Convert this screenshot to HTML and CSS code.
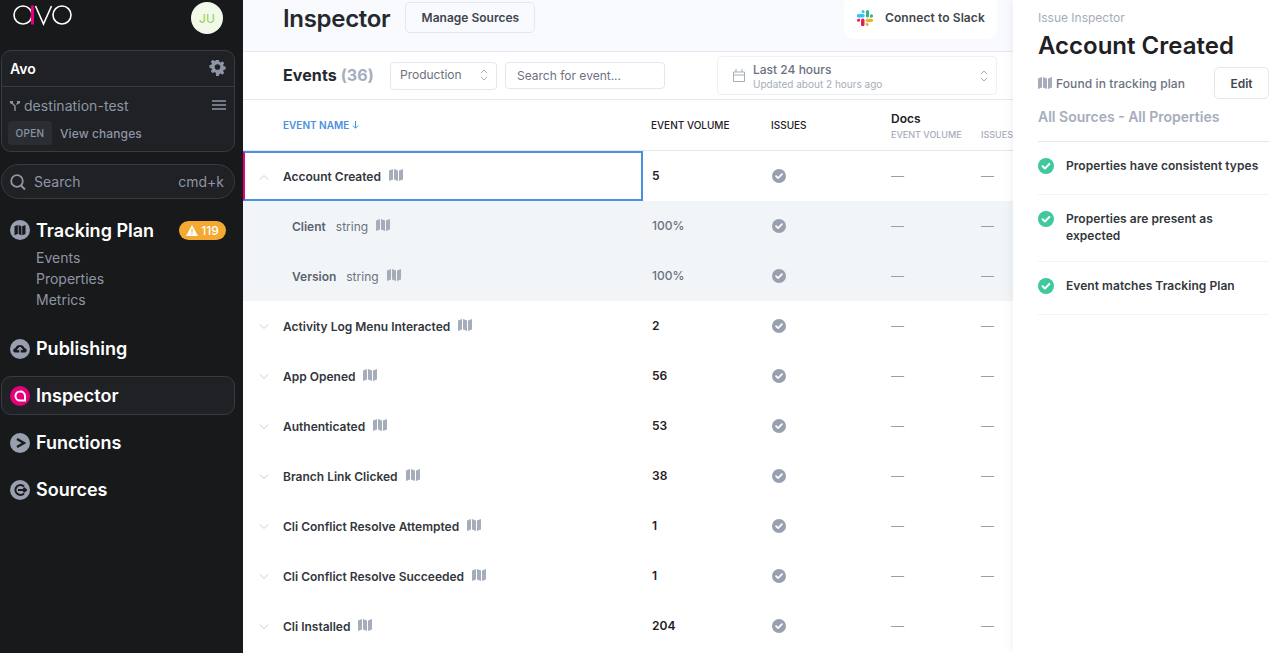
FILE: index.html
```html
<!DOCTYPE html>
<html>
  <head>
    <meta charset="UTF-8">
    <title>Inspector</title>
    <link rel="stylesheet" href="styles.css">
  </head>
  <body>
    <svg class="sprite" width="0" height="0">
      <symbol id="map" viewBox="0 0 14 12">
        <path d="M0 1.6 4 0v10.4L0 12zM5 0l4 1.6V12l-4-1.6zM10 1.6 14 0v10.4L10 12z" fill="currentColor"/>
      </symbol>
      <symbol id="check" viewBox="0 0 16 16">
        <circle cx="8" cy="8" r="8" fill="currentColor"/>
        <path d="M4.6 8.2 7 10.5l4.4-4.6" fill="none" stroke="#fff" stroke-width="2" stroke-linecap="round" stroke-linejoin="round"/>
      </symbol>
      <symbol id="updown" viewBox="0 0 8 12">
        <path d="M1 4.2 4 1l3 3.2M1 7.8 4 11l3-3.2" fill="none" stroke="currentColor" stroke-width="1"/>
      </symbol>
    </svg>

    <div class="app">
      <aside class="sidebar">
        <div class="brand">
          <svg class="logo" width="62" height="22" viewBox="0 0 62 22">
            <circle cx="11" cy="11" r="9" fill="none" stroke="#fff" stroke-width="1.6"/>
            <rect x="19" y="1.5" width="3" height="19" fill="#e6007e"/>
            <path d="M23.5 2 31.5 20 39.5 2" fill="none" stroke="#fff" stroke-width="1.6"/>
            <circle cx="50" cy="11" r="9" fill="none" stroke="#fff" stroke-width="1.6"/>
          </svg>
          <div class="avatar">JU</div>
        </div>

        <div class="workspace">
          <div class="workspace-top">
            <span>Avo</span>
            <svg class="gear" width="17" height="17" viewBox="0 0 18 18">
              <path d="M7.4 1h3.2l.4 2.2 1.4.6 1.9-1.3 2.2 2.2-1.3 1.9.6 1.4 2.2.4v3.2l-2.2.4-.6 1.4 1.3 1.9-2.2 2.2-1.9-1.3-1.4.6-.4 2.2H7.4L7 15.200l-1.400-.6-1.900 1.300-2.200-2.200 1.300-1.900-.6-1.400L0 10V6.800l2.200-.4.6-1.400L1.500 3.100 3.700.9l1.900 1.300L7 1.600z" transform="translate(0.500 0) scale(.95)" fill="#8e96a6"/>
              <circle cx="9" cy="8.500" r="3" fill="#1f2124"/>
            </svg>
          </div>
          <div class="workspace-branch">
            <div class="branch-line">
              <svg width="10" height="10" viewBox="0 0 10 10">
                <path d="M1.500 1.500 5 5v5M8.500 1.500 6.500 3.500" fill="none" stroke="#8e96a6" stroke-width="1.400"/>
                <rect x="0" y="0" width="3" height="2.500" fill="#8e96a6"/>
                <rect x="7" y="0" width="3" height="2.500" fill="#8e96a6"/>
              </svg>
              <span class="branch-name">destination-test</span>
              <svg class="burger" width="14" height="10" viewBox="0 0 14 10">
                <path d="M0 1h14M0 5h14M0 9h14" stroke="#8e96a6" stroke-width="1.600"/>
              </svg>
            </div>
            <div class="branch-status">
              <span class="open-tag">OPEN</span>
              <span class="view-changes">View changes</span>
            </div>
          </div>
        </div>

        <div class="search-box">
          <svg width="16" height="18" viewBox="0 0 16 18">
            <circle cx="7" cy="8" r="5.800" fill="none" stroke="#8e96a6" stroke-width="1.800"/>
            <path d="m11 12.500 4 4" stroke="#8e96a6" stroke-width="2"/>
          </svg>
          <span class="search-label">Search</span>
          <span class="search-key">cmd+k</span>
        </div>

        <nav class="nav">
          <div class="nav-item nav-tracking">
            <svg class="nav-icon" viewBox="0 0 20 20">
              <circle cx="10" cy="10" r="10" fill="#98a0b0"/>
              <path d="M4.500 6.200 7.800 5v9l-3.300 1.200zM8.600 5l2.800 1.200v9l-2.800-1.200zM12.200 6.200 15.500 5v9l-3.300 1.200z" fill="#18191b"/>
            </svg>
            <span>Tracking Plan</span>
            <span class="warn-badge">
              <svg width="12" height="11" viewBox="0 0 12 11">
                <path d="M6 0 12 11H0z" fill="#fff"/>
                <path d="M5.400 4h1.200v3.600H5.400zM5.400 8.300h1.200v1.200H5.400z" fill="#f5a933"/>
              </svg>
              119
            </span>
          </div>
          <div class="subnav">
            <a>Events</a>
            <a>Properties</a>
            <a>Metrics</a>
          </div>
          <div class="nav-item">
            <svg class="nav-icon" viewBox="0 0 20 20">
              <circle cx="10" cy="10" r="10" fill="#98a0b0"/>
              <path d="M4.500 13.500c-2-1-1.500-4 .8-4.200C6 7 8 6 10 6s4 1.200 4.700 3.300c2.300.2 2.800 3.200.8 4.200z" fill="#18191b"/>
              <path d="M10 15V9M7.500 11 10 8.500l2.500 2.500" fill="none" stroke="#98a0b0" stroke-width="1.500"/>
            </svg>
            <span>Publishing</span>
          </div>
          <div class="nav-item nav-active">
            <svg class="nav-icon" viewBox="0 0 20 20">
              <circle cx="10" cy="10" r="10" fill="#e6007e"/>
              <path d="M10 5.500a4.500 4.500 0 1 0 0 9h5v-4.500a4.500 4.500 0 0 0-5-4.500z" fill="none" stroke="#fff" stroke-width="2"/>
            </svg>
            <span>Inspector</span>
          </div>
          <div class="nav-item">
            <svg class="nav-icon" viewBox="0 0 20 20">
              <circle cx="10" cy="10" r="10" fill="#98a0b0"/>
              <path d="m7 6 7 4-7 4" fill="none" stroke="#18191b" stroke-width="2.400"/>
            </svg>
            <span>Functions</span>
          </div>
          <div class="nav-item">
            <svg class="nav-icon" viewBox="0 0 20 20">
              <circle cx="10" cy="10" r="10" fill="#98a0b0"/>
              <path d="M14 6.500A5 5 0 1 0 14 13.500M8 10h8M13.500 7.800 16 10l-2.500 2.200" fill="none" stroke="#18191b" stroke-width="2"/>
            </svg>
            <span>Sources</span>
          </div>
        </nav>
      </aside>

      <main class="main">
        <header class="page-header">
          <h1>Inspector</h1>
          <button class="btn-manage">Manage Sources</button>
          <div class="slack-btn">
            <svg width="16" height="16" viewBox="0 0 16 16">
              <path d="M6 0a1.500 1.500 0 0 0 0 3h1.500V1.500A1.500 1.500 0 0 0 6 0zM1.500 4a1.500 1.500 0 0 0 0 3.500H6a1.700 1.700 0 0 0 0-3.500z" fill="#36c5f0"/>
              <path d="M16 5.800a1.500 1.500 0 0 0-3 0v1.700h1.500A1.500 1.500 0 0 0 16 5.800zM12 1.500a1.500 1.500 0 0 0-3 0V6a1.500 1.500 0 0 0 3 0z" fill="#2eb67d"/>
              <path d="M10.200 16a1.500 1.500 0 0 0 0-3H8.700v1.500a1.500 1.500 0 0 0 1.500 1.500zM14.500 12a1.500 1.500 0 0 0 0-3.200h-4.300a1.600 1.600 0 0 0 0 3.200z" fill="#ecb22e"/>
              <path d="M0 10.200a1.500 1.500 0 0 0 3 0V8.700H1.500A1.500 1.500 0 0 0 0 10.200zM4 14.500a1.500 1.500 0 0 0 3.500 0v-4.300a1.700 1.700 0 0 0-3.500 0z" fill="#e01e5a"/>
            </svg>
            <span>Connect to Slack</span>
          </div>
        </header>

        <div class="toolbar">
          <div class="events-title">Events <span>(36)</span></div>
          <div class="env-select">
            <span>Production</span>
            <svg class="updown" width="8" height="12"><use href="#updown"/></svg>
          </div>
          <div class="event-search">Search for event...</div>
          <div class="date-select">
            <svg width="12" height="13" viewBox="0 0 12 13">
              <path d="M.5 3h11v9.500H.5zM.5 6h11M3 0v3M9 0v3" fill="none" stroke="#a5adbb"/>
            </svg>
            <div class="date-text">
              <div class="date-main">Last 24 hours</div>
              <div class="date-sub">Updated about 2 hours ago</div>
            </div>
            <svg class="updown" width="8" height="12"><use href="#updown"/></svg>
          </div>
        </div>

        <div class="table">
          <div class="row head">
            <div class="cell-name sort-head">EVENT NAME <svg width="7" height="8" viewBox="0 0 7 8"><path d="M3.500 0v7M.8 4.500l2.700 2.700 2.700-2.700" fill="none" stroke="currentColor"/></svg></div>
            <div class="cell-col">EVENT VOLUME</div>
            <div class="cell-col">ISSUES</div>
            <div class="cell-col source-head">
              <strong>Docs</strong>
              <em>EVENT VOLUME</em>
            </div>
            <div class="cell-col source-head">
              <strong>&nbsp;</strong>
              <em>ISSUES</em>
            </div>
          </div>

          <div class="row selected">
            <div class="cell-name">
              <svg class="chevron" width="10" height="6" viewBox="0 0 10 6"><path d="M1 5.500 5 1.500l4 4" fill="none" stroke="currentColor"/></svg>
              <span class="event-name">Account Created</span>
              <svg class="map-icon" width="14" height="12"><use href="#map"/></svg>
            </div>
            <div class="cell-num">5</div>
            <div class="cell-issue"><svg width="14" height="14"><use href="#check"/></svg></div>
            <div class="cell-dash">—</div>
            <div class="cell-dash">—</div>
          </div>

          <div class="row prop">
            <div class="cell-name">
              <span class="prop-name">Client</span>
              <span class="prop-type">string</span>
              <svg class="map-icon" width="14" height="12"><use href="#map"/></svg>
            </div>
            <div class="cell-pct">100%</div>
            <div class="cell-issue"><svg width="14" height="14"><use href="#check"/></svg></div>
            <div class="cell-dash">—</div>
            <div class="cell-dash">—</div>
          </div>

          <div class="row prop">
            <div class="cell-name">
              <span class="prop-name">Version</span>
              <span class="prop-type">string</span>
              <svg class="map-icon" width="14" height="12"><use href="#map"/></svg>
            </div>
            <div class="cell-pct">100%</div>
            <div class="cell-issue"><svg width="14" height="14"><use href="#check"/></svg></div>
            <div class="cell-dash">—</div>
            <div class="cell-dash">—</div>
          </div>

          <div class="row">
            <div class="cell-name">
              <svg class="chevron" width="10" height="6" viewBox="0 0 10 6"><path d="M1 .5l4 4 4-4" fill="none" stroke="currentColor"/></svg>
              <span class="event-name">Activity Log Menu Interacted</span>
              <svg class="map-icon" width="14" height="12"><use href="#map"/></svg>
            </div>
            <div class="cell-num">2</div>
            <div class="cell-issue"><svg width="14" height="14"><use href="#check"/></svg></div>
            <div class="cell-dash">—</div>
            <div class="cell-dash">—</div>
          </div>

          <div class="row">
            <div class="cell-name">
              <svg class="chevron" width="10" height="6" viewBox="0 0 10 6"><path d="M1 .5l4 4 4-4" fill="none" stroke="currentColor"/></svg>
              <span class="event-name">App Opened</span>
              <svg class="map-icon" width="14" height="12"><use href="#map"/></svg>
            </div>
            <div class="cell-num">56</div>
            <div class="cell-issue"><svg width="14" height="14"><use href="#check"/></svg></div>
            <div class="cell-dash">—</div>
            <div class="cell-dash">—</div>
          </div>

          <div class="row">
            <div class="cell-name">
              <svg class="chevron" width="10" height="6" viewBox="0 0 10 6"><path d="M1 .5l4 4 4-4" fill="none" stroke="currentColor"/></svg>
              <span class="event-name">Authenticated</span>
              <svg class="map-icon" width="14" height="12"><use href="#map"/></svg>
            </div>
            <div class="cell-num">53</div>
            <div class="cell-issue"><svg width="14" height="14"><use href="#check"/></svg></div>
            <div class="cell-dash">—</div>
            <div class="cell-dash">—</div>
          </div>

          <div class="row">
            <div class="cell-name">
              <svg class="chevron" width="10" height="6" viewBox="0 0 10 6"><path d="M1 .5l4 4 4-4" fill="none" stroke="currentColor"/></svg>
              <span class="event-name">Branch Link Clicked</span>
              <svg class="map-icon" width="14" height="12"><use href="#map"/></svg>
            </div>
            <div class="cell-num">38</div>
            <div class="cell-issue"><svg width="14" height="14"><use href="#check"/></svg></div>
            <div class="cell-dash">—</div>
            <div class="cell-dash">—</div>
          </div>

          <div class="row">
            <div class="cell-name">
              <svg class="chevron" width="10" height="6" viewBox="0 0 10 6"><path d="M1 .5l4 4 4-4" fill="none" stroke="currentColor"/></svg>
              <span class="event-name">Cli Conflict Resolve Attempted</span>
              <svg class="map-icon" width="14" height="12"><use href="#map"/></svg>
            </div>
            <div class="cell-num">1</div>
            <div class="cell-issue"><svg width="14" height="14"><use href="#check"/></svg></div>
            <div class="cell-dash">—</div>
            <div class="cell-dash">—</div>
          </div>

          <div class="row">
            <div class="cell-name">
              <svg class="chevron" width="10" height="6" viewBox="0 0 10 6"><path d="M1 .5l4 4 4-4" fill="none" stroke="currentColor"/></svg>
              <span class="event-name">Cli Conflict Resolve Succeeded</span>
              <svg class="map-icon" width="14" height="12"><use href="#map"/></svg>
            </div>
            <div class="cell-num">1</div>
            <div class="cell-issue"><svg width="14" height="14"><use href="#check"/></svg></div>
            <div class="cell-dash">—</div>
            <div class="cell-dash">—</div>
          </div>

          <div class="row">
            <div class="cell-name">
              <svg class="chevron" width="10" height="6" viewBox="0 0 10 6"><path d="M1 .5l4 4 4-4" fill="none" stroke="currentColor"/></svg>
              <span class="event-name">Cli Installed</span>
              <svg class="map-icon" width="14" height="12"><use href="#map"/></svg>
            </div>
            <div class="cell-num">204</div>
            <div class="cell-issue"><svg width="14" height="14"><use href="#check"/></svg></div>
            <div class="cell-dash">—</div>
            <div class="cell-dash">—</div>
          </div>
        </div>
      </main>

      <aside class="panel">
        <div class="panel-label">Issue Inspector</div>
        <h2>Account Created</h2>
        <div class="panel-found">
          <svg class="map-icon" width="14" height="12"><use href="#map"/></svg>
          <span>Found in tracking plan</span>
          <button class="btn-edit">Edit</button>
        </div>
        <div class="panel-scope">All Sources - All Properties</div>
        <div class="panel-item">
          <svg width="16" height="16"><use href="#check"/></svg>
          <span>Properties have consistent types</span>
        </div>
        <div class="panel-item">
          <svg width="16" height="16"><use href="#check"/></svg>
          <span>Properties are present as expected</span>
        </div>
        <div class="panel-item">
          <svg width="16" height="16"><use href="#check"/></svg>
          <span>Event matches Tracking Plan</span>
        </div>
      </aside>
    </div>
  </body>
</html>
```

FILE: styles.css
```css
* {
  box-sizing: border-box;
}

html, body {
  margin: 0;
  height: 100%;
  overflow: hidden;
}

body {
  background-color: #fff;
  font-family: Inter, "Liberation Sans", sans-serif;
  color: #1e2024;
}

.sprite {
  position: absolute;
}

.app {
  display: flex;
  height: 653px;
}

/* sidebar */

.sidebar {
  width: 243px;
  flex-shrink: 0;
  background-color: #18191b;
  padding: 0 8px 0 1px;
}

.brand {
  height: 50px;
  display: flex;
  align-items: flex-start;
  justify-content: space-between;
  padding: 4px 12px 0 11px;
}

.logo {
  display: block;
}

.avatar {
  width: 32px;
  height: 32px;
  margin-top: -2px;
  border-radius: 50%;
  background-color: #f2f9e9;
  color: #8ed14f;
  font-size: 12px;
  display: flex;
  align-items: center;
  justify-content: center;
}

.workspace {
  height: 102px;
  background-color: #1f2124;
  border: 1px solid #363b44;
  border-radius: 10px;
}

.workspace-top {
  height: 36px;
  border-bottom: 1px solid #363b44;
  display: flex;
  align-items: center;
  justify-content: space-between;
  padding: 0 8px;
  color: #fff;
  font-size: 14px;
  font-weight: 600;
}

.gear {
  margin-bottom: 2px;
}

.workspace-branch {
  padding: 10px 8px 0 6px;
}

.branch-line {
  display: flex;
  align-items: center;
  padding-left: 2px;
  color: #8e96a6;
  font-size: 14px;
}

.branch-name {
  margin-left: 4px;
  flex: 1;
  letter-spacing: 0.05px;
}

.burger {
  margin-bottom: 2px;
}

.branch-status {
  display: flex;
  align-items: center;
  margin-top: 7px;
}

.open-tag {
  width: 44px;
  height: 24px;
  background-color: #2a2e33;
  border-radius: 4px;
  color: #8e96a6;
  font-size: 10px;
  font-weight: 500;
  letter-spacing: 0.3px;
  display: flex;
  align-items: center;
  justify-content: center;
}

.view-changes {
  margin-left: 8px;
  color: #8e96a6;
  font-size: 12px;
  font-weight: 500;
  letter-spacing: 0.1px;
}

.search-box {
  height: 35px;
  margin-top: 12px;
  background-color: #1f2124;
  border: 1px solid #363b44;
  border-radius: 18px;
  display: flex;
  align-items: center;
  padding: 0 10px 0 8px;
  color: #8e96a6;
  font-size: 14px;
}

.search-label {
  margin-left: 8px;
  flex: 1;
}

.nav {
  padding-top: 21px;
}

.nav-item {
  height: 39px;
  margin-bottom: 8px;
  display: flex;
  align-items: center;
  padding-left: 8px;
  color: #fff;
  font-size: 18px;
  font-weight: 600;
  border: 1px solid transparent;
  border-radius: 10px;
}

.nav-icon {
  width: 20px;
  height: 20px;
  margin-right: 6px;
  flex-shrink: 0;
}

.nav-tracking {
  height: 20px;
  margin-bottom: 0;
  border: none;
  padding-left: 9px;
  padding-right: 9px;
}

.warn-badge {
  margin-left: auto;
  height: 19px;
  width: 47px;
  background-color: #f5a933;
  border-radius: 10px;
  color: #fff;
  font-size: 12px;
  font-weight: 500;
  display: flex;
  align-items: center;
  justify-content: center;
  gap: 3px;
}

.subnav {
  padding: 7px 0 0 35px;
  margin-bottom: 19px;
  color: #8e96a6;
  font-size: 14px;
}

.subnav a {
  display: block;
  height: 21px;
  line-height: 21px;
}

.nav-active {
  background-color: #1f2124;
  border-color: #363b44;
}

/* main column */

.main {
  width: 770px;
  flex-shrink: 0;
  overflow: hidden;
}

.page-header {
  height: 52px;
  background-color: #f8fafd;
  border-bottom: 1px solid #e4e7eb;
  display: flex;
  align-items: flex-start;
  padding: 2px 16px 0 40px;
}

.page-header h1 {
  margin: 0;
  font-size: 24px;
  font-weight: 600;
  line-height: 34px;
  letter-spacing: -0.3px;
  color: #25282d;
}

.btn-manage {
  margin-left: 15px;
  width: 130px;
  height: 31px;
  background: none;
  border: 1px solid #e4e7eb;
  border-radius: 5px;
  font-family: inherit;
  font-size: 12px;
  font-weight: 600;
  color: #41464e;
}

.slack-btn {
  margin-left: auto;
  margin-top: -6px;
  width: 153px;
  height: 43px;
  background-color: #fff;
  border-radius: 10px;
  display: flex;
  align-items: center;
  gap: 12px;
  padding-left: 13px;
  font-size: 12px;
  font-weight: 600;
  letter-spacing: 0.1px;
  color: #41464e;
}

.toolbar {
  height: 48px;
  border-bottom: 1px solid #e4e7eb;
  display: flex;
  align-items: center;
  padding: 0 16px 0 40px;
}

.events-title {
  font-size: 16px;
  font-weight: 700;
  width: 107px;
  padding-bottom: 2px;
  letter-spacing: 0.1px;
  color: #25282d;
}

.events-title span {
  color: #a5adbb;
}

.env-select {
  width: 107px;
  height: 28px;
  border: 1px solid #e4e7eb;
  border-radius: 4px;
  display: flex;
  align-items: center;
  justify-content: space-between;
  padding: 0 8px 2px 9px;
  font-size: 12px;
  color: #6b7280;
}

.updown {
  color: #a5adbb;
}

.event-search {
  width: 160px;
  height: 27px;
  margin-left: 8px;
  border: 1px solid #e4e7eb;
  border-radius: 4px;
  display: flex;
  align-items: center;
  padding-left: 11px;
  font-size: 12px;
  color: #6b7280;
}

.date-select {
  margin-left: auto;
  width: 280px;
  height: 39px;
  border: 1px solid #eef0f3;
  border-radius: 4px;
  display: flex;
  align-items: center;
  padding: 0 8px 0 15px;
}

.date-text {
  margin-left: 8px;
  flex: 1;
  padding-top: 1px;
}

.date-main {
  font-size: 12px;
  font-weight: 500;
  line-height: 15px;
  color: #6b7280;
}

.date-sub {
  font-size: 10px;
  line-height: 14px;
  color: #a5adbb;
}

/* table */

.row {
  display: grid;
  grid-template-columns: 400px 120px 120px 90px 40px;
  height: 50px;
  align-items: center;
}

.row.head {
  height: 51px;
  border-bottom: 1px solid #e4e7eb;
  font-size: 10px;
  font-weight: 500;
  color: #1e2024;
}

.row.prop {
  background-color: #f2f5f8;
}

.row.selected .cell-name {
  border: 2px solid #4a90e2;
  border-left-color: #e6007e;
  padding-left: 38px;
}

.cell-name {
  height: 100%;
  display: flex;
  align-items: center;
  padding-left: 40px;
  position: relative;
}

.sort-head {
  color: #4a90e2;
  font-weight: 600;
  gap: 3px;
}

.cell-col {
  padding-left: 8px;
}

.source-head strong {
  display: block;
  font-size: 12px;
  font-weight: 600;
  line-height: 17px;
}

.source-head em {
  display: block;
  font-style: normal;
  font-size: 9px;
  line-height: 16px;
  margin-bottom: -2px;
  color: #a5adbb;
  white-space: nowrap;
}

.chevron {
  position: absolute;
  left: 16px;
  top: 23px;
  color: #c6cbd3;
}

.row.selected .chevron {
  left: 14px;
  top: 21px;
}

.event-name {
  font-size: 12px;
  font-weight: 600;
  color: #33373d;
  padding-top: 1px;
}

.map-icon {
  color: #a5adbb;
  margin: 0 0 3px 8px;
}

.prop-name {
  margin-left: 9px;
  font-size: 12px;
  font-weight: 600;
  color: #5c6370;
  padding-top: 1px;
}

.prop-type {
  margin-left: 10px;
  font-size: 12px;
  color: #6b7280;
  padding-top: 1px;
}

.cell-num {
  padding-left: 9px;
  padding-bottom: 1px;
  font-size: 12px;
  font-weight: 600;
}

.cell-pct {
  padding-left: 9px;
  padding-bottom: 1px;
  font-size: 12px;
  font-weight: 500;
  color: #6b7280;
}

.cell-issue {
  padding-left: 9px;
  color: #98a0b0;
  display: flex;
}

.cell-dash {
  padding-left: 8px;
  padding-bottom: 1px;
  font-size: 13px;
  color: #98a0b0;
}

/* issue panel */

.panel {
  flex: 1;
  background-color: #fff;
  box-shadow: 0 0 10px rgba(0, 0, 0, 0.08);
  padding: 11px 19px 0 25px;
  position: relative;
}

.panel-label {
  font-size: 12px;
  line-height: 14px;
  color: #a5adbb;
}

.panel h2 {
  margin: 4px 0 0 0;
  font-size: 24px;
  font-weight: 600;
  line-height: 34px;
  color: #1e2024;
}

.panel-found {
  display: flex;
  align-items: center;
  margin-top: 4px;
  font-size: 12px;
  font-weight: 500;
  letter-spacing: 0.1px;
  color: #6b7280;
}

.panel-found .map-icon {
  margin: 0 4px 0 0;
}

.btn-edit {
  margin-left: auto;
  width: 55px;
  height: 32px;
  background: none;
  border: 1px solid #e4e7eb;
  border-radius: 5px;
  font-family: inherit;
  font-size: 12px;
  font-weight: 600;
  color: #41464e;
}

.panel-scope {
  height: 43px;
  padding-top: 9px;
  border-bottom: 1px solid #e4e7eb;
  font-size: 14px;
  font-weight: 600;
  color: #a5adbb;
}

.panel-item {
  display: flex;
  align-items: flex-start;
  gap: 12px;
  min-height: 53px;
  padding: 16px 0;
  border-bottom: 1px solid #f2f3f5;
  font-size: 12px;
  font-weight: 600;
  line-height: 17px;
  letter-spacing: 0.05px;
  color: #33373d;
}

.panel-item span {
  max-width: 196px;
  margin: -1px 0 1px 0;
}

.panel-item svg {
  color: #3fc79e;
  flex-shrink: 0;
}
```
